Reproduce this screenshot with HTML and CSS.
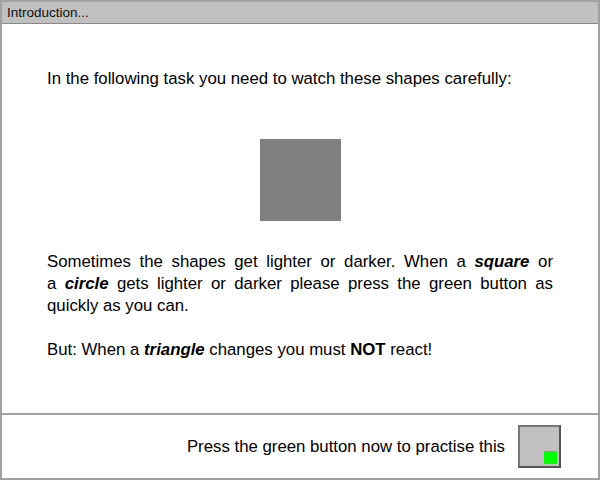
FILE: index.html
```html
<!DOCTYPE html>
<html lang="en">
<head>
    <meta charset="UTF-8">
    <title>Introduction</title>
    <link rel="stylesheet" href="styles.css">
</head>
<body>

<div class="frame">
    <div class="title-bar">Introduction...</div>

    <div class="content">
        <p class="lead">In the following task you need to watch these shapes carefully:</p>

        <div class="shape-area">
            <div class="square"></div>
        </div>

        <p class="text">Sometimes the shapes get lighter or darker. When a <b><i>square</i></b> or a&nbsp;<b><i>circle</i></b> gets lighter or darker please press the green button as quickly as you can.</p>
        <p class="text">But: When a <b><i>triangle</i></b> changes you must <b>NOT</b> react!</p>
    </div>

    <div class="footer">
        <span class="prompt">Press the green button now to practise this</span>
        <button class="go-button"><span class="green"></span></button>
    </div>
</div>

</body>
</html>
```

FILE: styles.css
```css
body {
    margin: 0;
    padding: 0;
    font-family: "Liberation Sans", Arial, sans-serif;
    color: #000;
    background-color: #fff;
}

.frame {
    width: 600px;
    height: 480px;
    box-sizing: border-box;
    border: 2px solid #a0a0a0;
    display: flex;
    flex-direction: column;
}

.title-bar {
    height: 21px;
    line-height: 21px;
    padding-left: 5px;
    font-size: 13.5px;
    background-color: #c0c0c0;
    border-bottom: 1px solid #8a8a8a;
    color: #111;
}

.content {
    flex: 1;
    padding: 0 45px;
}

.lead {
    font-size: 16.8px;
    line-height: 22px;
    margin: 44px 0 0;
}

.shape-area {
    display: flex;
    justify-content: center;
    margin-top: 49px;
}

.square {
    width: 81px;
    height: 82px;
    background-color: #808080;
}

.text {
    font-size: 16.8px;
    line-height: 22px;
    text-align: justify;
    margin: 0;
}

.shape-area + .text {
    margin-top: 30px;
}

.text + .text {
    margin-top: 22px;
}

.footer {
    height: 63px;
    border-top: 2px solid #a0a0a0;
    display: flex;
    align-items: center;
    justify-content: flex-end;
    padding-right: 37px;
}

.prompt {
    font-size: 16.8px;
    margin-right: 13px;
}

.go-button {
    width: 43px;
    height: 43px;
    padding: 0;
    background-color: #c0c0c0;
    border: 2px solid #555;
    border-top-color: #777;
    border-left-color: #777;
    position: relative;
}

.green {
    position: absolute;
    right: 2px;
    bottom: 2px;
    width: 13px;
    height: 13px;
    background-color: #00ff00;
}
```
